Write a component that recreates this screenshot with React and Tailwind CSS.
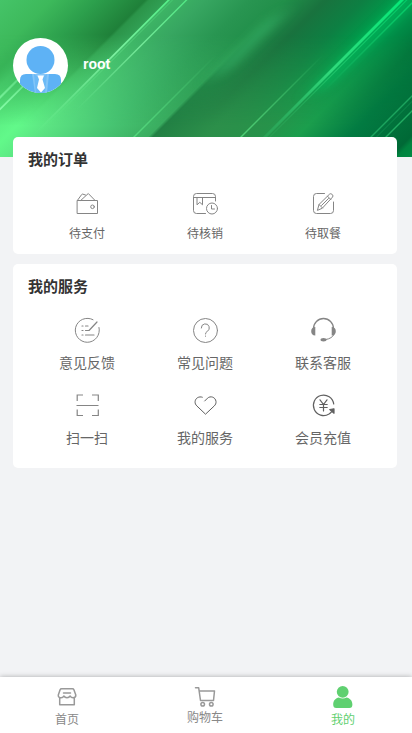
const line = {
    fill: 'none',
    stroke: '#858585',
    strokeWidth: 1,
    strokeLinecap: 'round',
    strokeLinejoin: 'round',
};

const WalletIcon = () => (
    <svg className="h-[26px] w-[26px]" viewBox="-.5 0 26 26" {...line}>
        <path d="M3 10.500h20v13H3zM3.200 10l4-5.500q.4-.5 1-.4l2.800.9M6.500 10.200l7.300-6.700 6.500 6.700" />
        <circle cx="18" cy="16.800" r="1.800" />
    </svg>
);

const VerifyIcon = () => (
    <svg className="h-[26px] w-[26px]" viewBox="-.5 0 26 26" {...line}>
        <path d="M13 23.500H4a3 3 0 0 1-3-3v-14a3 3 0 0 1 3-3h16a3 3 0 0 1 3 3V11M1 7.500h22M4.500 7.500v7.300l2.800-2.500 2.700 2.500V7.500" />
        <circle cx="19.500" cy="18.500" r="5.500" />
        <path d="M19 15.500v3.500h3" />
    </svg>
);

const PickupIcon = () => (
    <svg className="h-[26px] w-[26px]" viewBox="-.5 0 26 26" {...line}>
        <path d="M14 3.500H6a3 3 0 0 0-3 3v14a3 3 0 0 0 3 3h14a3 3 0 0 0 3-3V12" />
        <path d="M7 20l1.500-5.500L19 4.200q1.200-1 2.400 0l.6.600q1 1.200 0 2.300L12 18zM17 6.200l3.500 3.500M8.500 14.500L12 18M11 15.500l7-7" />
    </svg>
);

const FeedbackIcon = () => (
    <svg className="h-[26px] w-[26px]" viewBox="-.5 -.5 26 26" {...line}>
        <path d="M18.500 2.200A12 12 0 1 0 24.500 10" />
        <path strokeWidth="1.200" d="M7.500 8.500h1M11 8.500h2.500M7.500 13h1M11 13h3.500L22.500 4.500M7.500 17.500h1M11 17.500h8.500" />
    </svg>
);

const QuestionIcon = () => (
    <svg className="h-[26px] w-[26px]" viewBox="-.5 -.5 26 26" {...line}>
        <circle cx="13" cy="13" r="12" />
        <path d="M8.800 10.500a4 4 0 1 1 5.700 3.500q-1.500.8-1.500 2.500M13 18.500v.3" />
    </svg>
);

const ServiceIcon = () => (
    <svg className="h-[26px] w-[26px]" viewBox="-.5 -.5 26 26" {...line}>
        <path strokeWidth="1.300" d="M3 11a10 10 0 0 1 20 0" />
        <path d="M23.500 17q-2 4-8 5" />
        <g fill="#858585" stroke="none">
            <path d="M4.800 9.500v8.500C2 18 .7 16.500.7 13.800S2 9.500 4.800 9.500zM21.200 9.500v8.500c2.800 0 4.100-1.500 4.100-4.200s-1.300-4.300-4.100-4.300z" />
            <ellipse cx="13" cy="22.200" rx="3" ry="1.700" />
        </g>
    </svg>
);

const ScanIcon = () => (
    <svg className="h-[26px] w-[26px]" viewBox="-.5 -.5 26 26" {...line} strokeLinecap="butt" strokeLinejoin="miter" strokeWidth="1.200">
        <path d="M8.500 2.500H2.700v6M17.500 2.500h6.300v6M2.700 17v6h5.800M23.800 17v6h-6.300M2 13h22" />
    </svg>
);

const HeartIcon = () => (
    <svg className="h-[26px] w-[26px]" viewBox="-.5 -.5 26 26" {...line} stroke="#606060">
        <path d="M9.800 4.700C6.500 3.500 3 5.500 2.600 9c-.2 1.800.5 3.200 1.700 4.400L13 21.700l8.800-8.300c1.200-1.200 1.900-2.600 1.700-4.400-.5-4.500-5.700-6-8.500-3.300L12.200 8.500" />
    </svg>
);

const RechargeIcon = () => (
    <svg className="h-[26px] w-[26px]" viewBox="-.5 -.5 26 26" {...line} stroke="#606060" strokeWidth="1.200">
        <path d="M23.200 11.500A10.200 10.200 0 1 0 18.500 21.500q1.500-1 2.500-2.200" />
        <path fill="#606060" d="M19.300 17l4.200-.7v4.400z" />
        <path d="M9.500 7.300L13 12l3.500-4.700M9.300 12h7.400M9.300 15h7.400M13 12v6.500" />
    </svg>
);

const ShopIcon = () => (
    <svg className="h-6 w-6" viewBox="0 0 24 24" {...line} stroke="#999" strokeWidth="1.500">
        <path d="M6.500 3.800h11q1 0 1.400 1L20.800 10q.2 2.500-2.700 2.800-2 0-2.900-1.800-1.200 1.800-3.200 1.800T8.800 11Q8 12.800 6 12.800 3 12.500 3.300 10l1.800-5.200q.4-1 1.400-1zM4.700 13v6.800h14.600V13M8.500 8h7" />
    </svg>
);

const CartIcon = () => (
    <svg className="h-6 w-6" viewBox="0 0 24 24" {...line} stroke="#999" strokeWidth="1.500">
        <path d="M2.500 2.800h3.200l1.800 12.700h13l1-9.500H6.200" />
        <circle cx="9.700" cy="19.300" r="1.800" />
        <circle cx="18.300" cy="19.300" r="1.800" />
    </svg>
);

const UserIcon = () => (
    <svg className="h-6 w-6" viewBox="0 0 24 24" fill="#5fd070">
        <circle cx="11.700" cy="6.800" r="5.900" />
        <path d="M2.200 19.500c0-4 2.600-6.300 5.600-6.900 2.400 1.300 5.400 1.300 7.800 0 3 .6 5.800 2.900 5.800 6.900 0 2.500-1 3.500-3 3.500H5.200c-2 0-3-1-3-3.500z" />
    </svg>
);

const orders = [
    { name: '待支付', Icon: WalletIcon },
    { name: '待核销', Icon: VerifyIcon },
    { name: '待取餐', Icon: PickupIcon },
];

const services = [
    { name: '意见反馈', Icon: FeedbackIcon },
    { name: '常见问题', Icon: QuestionIcon },
    { name: '联系客服', Icon: ServiceIcon },
    { name: '扫一扫', Icon: ScanIcon },
    { name: '我的服务', Icon: HeartIcon },
    { name: '会员充值', Icon: RechargeIcon },
];

// Diagonal streaks: inside the skewed group x is measured on the top edge
const streaks = [
    { x: 167.5, w: 2.5, fill: 'url(#fadeDown)', opacity: 0.8 },
    { x: 172, w: 1, fill: 'url(#fadeDown)', opacity: 0.3 },
    { x: 185.5, w: 2, fill: 'url(#fadeDownFast)', opacity: 0.7 },
    { x: 96, w: 3, fill: 'url(#fadeUp)', opacity: 0.8 },
    { x: 108, w: 2.5, fill: 'url(#fadeUp)', opacity: 0.9 },
    { x: 270, w: 2, fill: 'url(#fadeUpLate)', opacity: 0.5 },
    { x: 377, w: 2, fill: 'url(#fadeUpLate)', opacity: 0.6 },
    { x: 400, w: 4, fill: 'url(#neon)', opacity: 0.9 },
    { x: 406, w: 1.5, fill: 'url(#neon)', opacity: 0.5 },
    { x: 414, w: 2, fill: 'url(#neonShort)', opacity: 0.6 },
    { x: 507, w: 2, fill: '#2fc474', opacity: 0.6 },
    { x: 513, w: 1, fill: '#2fc474', opacity: 0.3 },
    { x: 522, w: 2, fill: '#2fc474', opacity: 0.7 },
];

function Banner() {
    return (
        <svg className="col-start-1 row-start-1 h-[157px] w-full" viewBox="0 0 412 157" preserveAspectRatio="none">
            <defs>
                <linearGradient id="top" gradientUnits="userSpaceOnUse" x1="0" y1="0" x2="570" y2="0">
                    <stop offset="0" stopColor="#45c468" />
                    <stop offset=".09" stopColor="#3db95b" />
                    <stop offset=".17" stopColor="#2c9f4c" />
                    <stop offset=".255" stopColor="#1f8039" />
                    <stop offset=".262" stopColor="#2b9449" />
                    <stop offset=".293" stopColor="#319f54" />
                    <stop offset=".3" stopColor="#3db565" />
                    <stop offset=".36" stopColor="#37a661" />
                    <stop offset=".44" stopColor="#289551" />
                    <stop offset=".5" stopColor="#228f4a" />
                    <stop offset=".57" stopColor="#19723e" />
                    <stop offset=".64" stopColor="#0d8043" />
                    <stop offset=".7" stopColor="#009a4a" />
                    <stop offset=".74" stopColor="#00924a" />
                    <stop offset=".81" stopColor="#00733a" />
                    <stop offset="1" stopColor="#006633" />
                </linearGradient>
                <linearGradient id="bottom" gradientUnits="userSpaceOnUse" x1="0" y1="0" x2="570" y2="0">
                    <stop offset="0" stopColor="#45c468" />
                    <stop offset=".12" stopColor="#39bd5b" />
                    <stop offset=".15" stopColor="#55e47b" />
                    <stop offset=".25" stopColor="#62f98a" />
                    <stop offset=".31" stopColor="#5be282" />
                    <stop offset=".41" stopColor="#48c673" />
                    <stop offset=".5" stopColor="#3aad60" />
                    <stop offset=".508" stopColor="#228044" />
                    <stop offset=".6" stopColor="#2c8f4a" />
                    <stop offset=".69" stopColor="#27924a" />
                    <stop offset=".76" stopColor="#1b9e4d" />
                    <stop offset=".85" stopColor="#027b42" />
                    <stop offset=".96" stopColor="#006936" />
                    <stop offset=".972" stopColor="#00833f" />
                    <stop offset="1" stopColor="#008a43" />
                </linearGradient>
                <linearGradient id="ramp" x1="0" y1="0" x2="0" y2="1">
                    <stop offset=".22" stopColor="#000" />
                    <stop offset=".8" stopColor="#fff" />
                </linearGradient>
                <mask id="lower" maskUnits="userSpaceOnUse" x="0" y="0" width="570" height="157">
                    <rect width="570" height="157" fill="url(#ramp)" />
                </mask>
                <linearGradient id="fadeDown" x1="0" y1="0" x2="0" y2="1">
                    <stop offset="0" stopColor="#5cff92" />
                    <stop offset=".35" stopColor="#8dffb0" />
                    <stop offset=".85" stopColor="#7df59f" stopOpacity="0" />
                </linearGradient>
                <linearGradient id="fadeDownFast" x1="0" y1="0" x2="0" y2="1">
                    <stop offset="0" stopColor="#5cff92" />
                    <stop offset=".3" stopColor="#8dffb0" />
                    <stop offset=".7" stopColor="#7df59f" stopOpacity="0" />
                </linearGradient>
                <linearGradient id="fadeUp" x1="0" y1="0" x2="0" y2="1">
                    <stop offset=".3" stopColor="#8affac" stopOpacity="0" />
                    <stop offset=".7" stopColor="#8affac" />
                </linearGradient>
                <linearGradient id="fadeUpLate" x1="0" y1="0" x2="0" y2="1">
                    <stop offset=".35" stopColor="#6dff98" stopOpacity="0" />
                    <stop offset=".9" stopColor="#6dff98" />
                </linearGradient>
                <linearGradient id="neon" x1="0" y1="0" x2="0" y2="1">
                    <stop offset="0" stopColor="#08ef7c" />
                    <stop offset=".45" stopColor="#35df80" />
                    <stop offset="1" stopColor="#2fa95c" stopOpacity=".3" />
                </linearGradient>
                <linearGradient id="neonShort" x1="0" y1="0" x2="0" y2="1">
                    <stop offset="0" stopColor="#08ef7c" />
                    <stop offset=".6" stopColor="#35df80" stopOpacity="0" />
                </linearGradient>
                <filter id="soft" x="-200%" y="-50%" width="500%" height="200%">
                    <feGaussianBlur stdDeviation="7" />
                </filter>
            </defs>
            <g transform="skewX(-45)">
                <rect width="570" height="157" fill="url(#top)" />
                <rect width="570" height="157" fill="url(#bottom)" mask="url(#lower)" />
                <rect x="286" y="15" width="14" height="60" fill="#37b56a" opacity=".6" filter="url(#soft)" />
                <rect x="400" y="-10" width="16" height="100" fill="#00c464" opacity=".55" filter="url(#soft)" />
                {streaks.map((s) => (
                    <rect key={s.x} x={s.x} width={s.w} height="157" fill={s.fill} opacity={s.opacity} />
                ))}
            </g>
        </svg>
    );
}

function Avatar() {
    return (
        <svg className="h-[55px] w-[55px] rounded-full bg-white" viewBox="0 0 55 55">
            <circle cx="27.500" cy="22" r="14" fill="#5eb2f5" />
            <path d="M7 55V42q0-6 6-6h29q6 0 6 6v13z" fill="#5eb2f5" />
            <path d="M19 36h17l-2 19H22z" fill="#83c5f8" />
            <path d="M21 36l6.500 5 6.500-5-2 19h-9z" fill="#5eb2f5" opacity=".6" />
            <path d="M24.500 37.500h6.500l-1.500 4 2.500 8.500-4 4.500-4-4.500 2-8.500z" fill="#fff" />
        </svg>
    );
}

export default function App() {
    return (
        <div className="flex h-[733px] w-full flex-col overflow-hidden bg-[#f2f3f5] font-['Liberation_Sans','Noto_Sans_CJK_SC',sans-serif]">
            <header className="grid h-[157px] shrink-0">
                <Banner />
                <div className="z-10 col-start-1 row-start-1 mt-[38px] flex h-[55px] items-center pl-[13px]">
                    <Avatar />
                    <span className="mb-[3px] ml-[15px] text-sm font-bold text-white">root</span>
                </div>
            </header>

            <main className="z-10 -mt-5 flex-1 pr-[15px] pl-[13px]">
                <section className="h-[117px] rounded-[5px] bg-white px-[15px] pt-3">
                    <h2 className="text-[15px] leading-[22px] font-bold text-[#333]">我的订单</h2>
                    <div className="mt-[19px] grid grid-cols-3">
                        {orders.map(({ name, Icon }) => (
                            <div key={name} className="flex flex-col items-center">
                                <Icon />
                                <span className="mt-[9px] text-xs leading-[18px] text-[#666]">{name}</span>
                            </div>
                        ))}
                    </div>
                </section>

                <section className="mt-2.5 h-[204px] rounded-[5px] bg-white px-[15px] pt-3">
                    <h2 className="text-[15px] leading-[22px] font-bold text-[#333]">我的服务</h2>
                    <div className="mt-[19px] grid grid-cols-3 gap-y-[19px]">
                        {services.map(({ name, Icon }) => (
                            <div key={name} className="flex h-14 flex-col items-center">
                                <Icon />
                                <span className="mt-2.5 text-sm leading-5 text-[#666]">{name}</span>
                            </div>
                        ))}
                    </div>
                </section>
            </main>

            <nav className="flex h-14 shrink-0 bg-white pt-2 text-xs leading-[18px] text-[#888] shadow-[0_0_5px_rgba(0,0,0,0.3)]">
                <div className="flex w-[134px] flex-col items-center">
                    <ShopIcon />
                    <span className="mt-0.5">首页</span>
                </div>
                <div className="flex w-[142px] flex-col items-center">
                    <CartIcon />
                    <span>购物车</span>
                </div>
                <div className="flex w-[134px] flex-col items-center text-[#5fd070]">
                    <UserIcon />
                    <span className="mt-0.5">我的</span>
                </div>
            </nav>
        </div>
    );
}
